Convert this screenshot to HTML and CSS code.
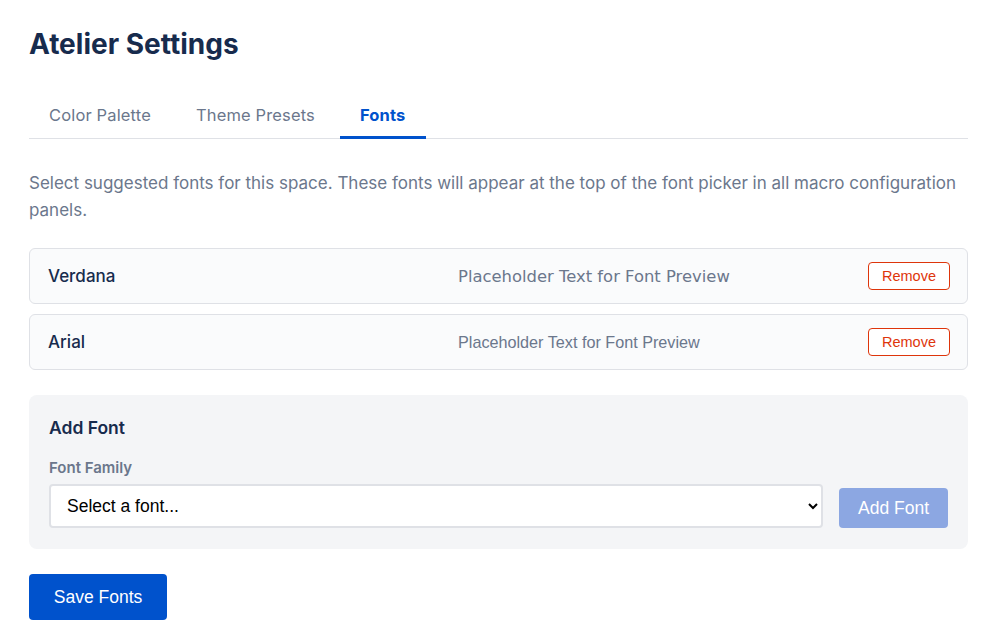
FILE: index.html
```html
<!DOCTYPE html>
<html lang="en">
<head>
    <meta charset="UTF-8">
    <meta name="viewport" content="width=device-width, initial-scale=1.0">
    <title>Atelier Settings</title>
    <link rel="stylesheet" href="styles.css">
</head>
<body>
    <div class="container">
        <h1>Atelier Settings</h1>

        <div class="tabs">
            <button class="tab">Color Palette</button>
            <button class="tab">Theme Presets</button>
            <button class="tab active">Fonts</button>
        </div>

        <p class="intro">Select suggested fonts for this space. These fonts will appear at the top of the font picker in all macro configuration panels.</p>

        <div class="font-list">
            <div class="font-row">
                <span class="font-name">Verdana</span>
                <span class="font-preview preview-verdana">Placeholder Text for Font Preview</span>
                <button class="remove-btn">Remove</button>
            </div>
            <div class="font-row">
                <span class="font-name">Arial</span>
                <span class="font-preview preview-arial">Placeholder Text for Font Preview</span>
                <button class="remove-btn">Remove</button>
            </div>
        </div>

        <div class="add-panel">
            <h3>Add Font</h3>
            <label for="font-family">Font Family</label>
            <div class="add-row">
                <select id="font-family">
                    <option value="">Select a font...</option>
                    <option value="georgia">Georgia</option>
                    <option value="tahoma">Tahoma</option>
                    <option value="courier">Courier New</option>
                </select>
                <button class="add-btn" disabled>Add Font</button>
            </div>
        </div>

        <button class="save-btn">Save Fonts</button>
    </div>
</body>
</html>
```

FILE: styles.css
```css
body {
    font-family: Inter, "Noto Sans", sans-serif;
    background-color: #fff;
    margin: 0;
    padding: 0;
}

.container {
    padding: 27px 26px 0 29px;
}

h1 {
    margin: 0;
    font-size: 28px;
    line-height: 34px;
    font-weight: 700;
    color: #172b4d;
}

.tabs {
    display: flex;
    gap: 5px;
    margin-top: 30px;
    border-bottom: 1px solid #dfe1e6;
}

.tab {
    font-family: inherit;
    font-size: 16.5px;
    letter-spacing: 0.15px;
    line-height: 24px;
    font-weight: 400;
    color: #6b778c;
    background: none;
    border: none;
    border-bottom: 3px solid transparent;
    margin-bottom: -1px;
    padding: 12px 20px 9px;
    cursor: pointer;
}

.tab.active {
    color: #0052cc;
    font-weight: 700;
    border-bottom-color: #0052cc;
}

.intro {
    margin: 31px 0 24px;
    font-size: 17px;
    line-height: 27px;
    color: #6b778c;
}

.font-list {
    display: flex;
    flex-direction: column;
    gap: 10px;
}

.font-row {
    display: flex;
    align-items: center;
    gap: 16px;
    height: 54px;
    padding: 0 17px 0 18px;
    background-color: #fafbfc;
    border: 1px solid #dfe1e6;
    border-radius: 6px;
}

.font-name {
    flex: 1;
    font-size: 17px;
    font-weight: 500;
    color: #172b4d;
}

.font-preview {
    flex: 1;
    color: #6b778c;
}

.preview-verdana {
    font-family: Verdana, "DejaVu Sans", sans-serif;
    font-size: 16.4px;
}

.preview-arial {
    font-family: Arial, "Liberation Sans", sans-serif;
    font-size: 16.2px;
}

.remove-btn {
    width: 82px;
    height: 28px;
    font-family: Arial, "Liberation Sans", sans-serif;
    font-size: 14.5px;
    color: #de350b;
    background-color: #fff;
    border: 1px solid #de350b;
    border-radius: 4px;
    cursor: pointer;
}

.add-panel {
    margin-top: 25px;
    padding: 20px 20px 21px;
    background-color: #f4f5f7;
    border-radius: 8px;
}

.add-panel h3 {
    margin: 0 0 17px;
    font-size: 17.5px;
    line-height: 26px;
    font-weight: 600;
    color: #172b4d;
}

.add-panel label {
    display: block;
    margin-bottom: 6px;
    font-size: 15px;
    line-height: 20px;
    font-weight: 600;
    color: #6b778c;
}

.add-row {
    display: flex;
    align-items: flex-end;
    gap: 16px;
}

.add-row select {
    flex: 1;
    height: 44px;
    padding: 0 12px;
    font-family: Arial, "Liberation Sans", sans-serif;
    font-size: 17.5px;
    color: #000;
    background-color: #fff;
    border: 2px solid #dfe1e6;
    border-radius: 4px;
}

.add-btn {
    width: 109px;
    height: 40px;
    font-family: Arial, "Liberation Sans", sans-serif;
    font-size: 17.5px;
    color: #fff;
    background-color: #8ca7e2;
    border: none;
    border-radius: 4px;
}

.save-btn {
    margin-top: 25px;
    width: 138px;
    height: 46px;
    font-family: Arial, "Liberation Sans", sans-serif;
    font-size: 17.5px;
    color: #fff;
    background-color: #0052cc;
    border: none;
    border-radius: 4px;
    cursor: pointer;
}
```
